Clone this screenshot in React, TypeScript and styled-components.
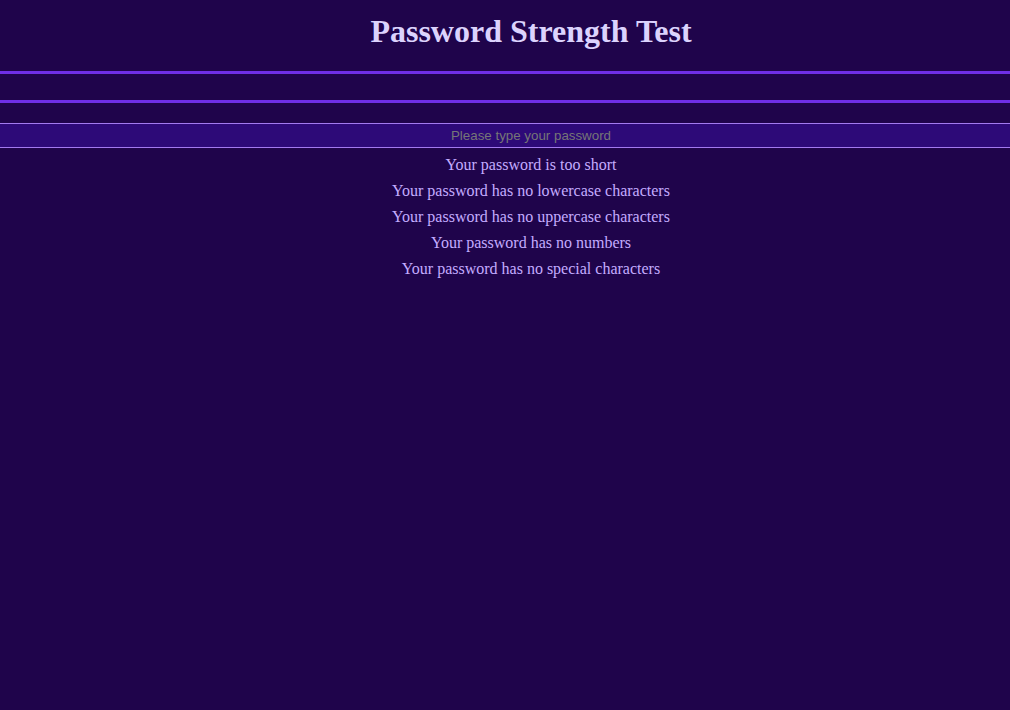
import React from "react";
import styled, { createGlobalStyle } from "styled-components";

const GlobalStyle = createGlobalStyle`
  html, body {
    margin: 0;
    padding: 0;
    background: #1f044b;
    min-height: 100%;
  }
  body {
    font-family: "Liberation Serif", "Times New Roman", serif;
  }
`;

const Page = styled.main`
  display: flex;
  flex-direction: column;
  min-height: 710px;
  background: #1f044b;
`;

const Title = styled.h1`
  margin: 0;
  padding: 13px 0 21px 52px;
  line-height: 37px;
  font-size: 32px;
  font-weight: bold;
  text-align: center;
  color: #dcd3fd;
  font-family: "Liberation Serif", "Times New Roman", serif;
`;

const Meter = styled.div`
  height: 26px;
  border-top: 3px solid #6f2fe6;
  border-bottom: 3px solid #6f2fe6;
  margin-bottom: 20px;
`;

const Input = styled.input`
  box-sizing: border-box;
  width: 100%;
  height: 25px;
  margin: 0;
  padding: 0 0 0 52px;
  border: none;
  border-top: 1px solid #a37af0;
  border-bottom: 1px solid #a37af0;
  background: #2d0a78;
  color: #e6dcff;
  caret-color: #ffffff;
  font-family: "Liberation Sans", Arial, sans-serif;
  font-size: 13.333px;
  text-align: center;
  outline: none;

  &::placeholder {
    color: #767676;
  }
`;

const Messages = styled.ul`
  list-style: none;
  margin: 4px 0 0;
  padding: 0 0 0 52px;
`;

const Message = styled.li`
  text-align: center;
  font-size: 16px;
  line-height: 26px;
  color: #c4acff;
  font-family: "Liberation Serif", "Times New Roman", serif;
`;

const messages = [
  "Your password is too short",
  "Your password has no lowercase characters",
  "Your password has no uppercase characters",
  "Your password has no numbers",
  "Your password has no special characters",
];

export default function App() {
  const [value, setValue] = React.useState("");
  return (
    <>
      <GlobalStyle />
      <Page>
        <Title>Password Strength Test</Title>
        <Meter />
        <Input
          type="password"
          placeholder="Please type your password"
          value={value}
          onChange={(e) => setValue(e.target.value)}
          autoFocus
        />
        <Messages>
          {messages.map((m) => (
            <Message key={m}>{m}</Message>
          ))}
        </Messages>
      </Page>
    </>
  );
}
